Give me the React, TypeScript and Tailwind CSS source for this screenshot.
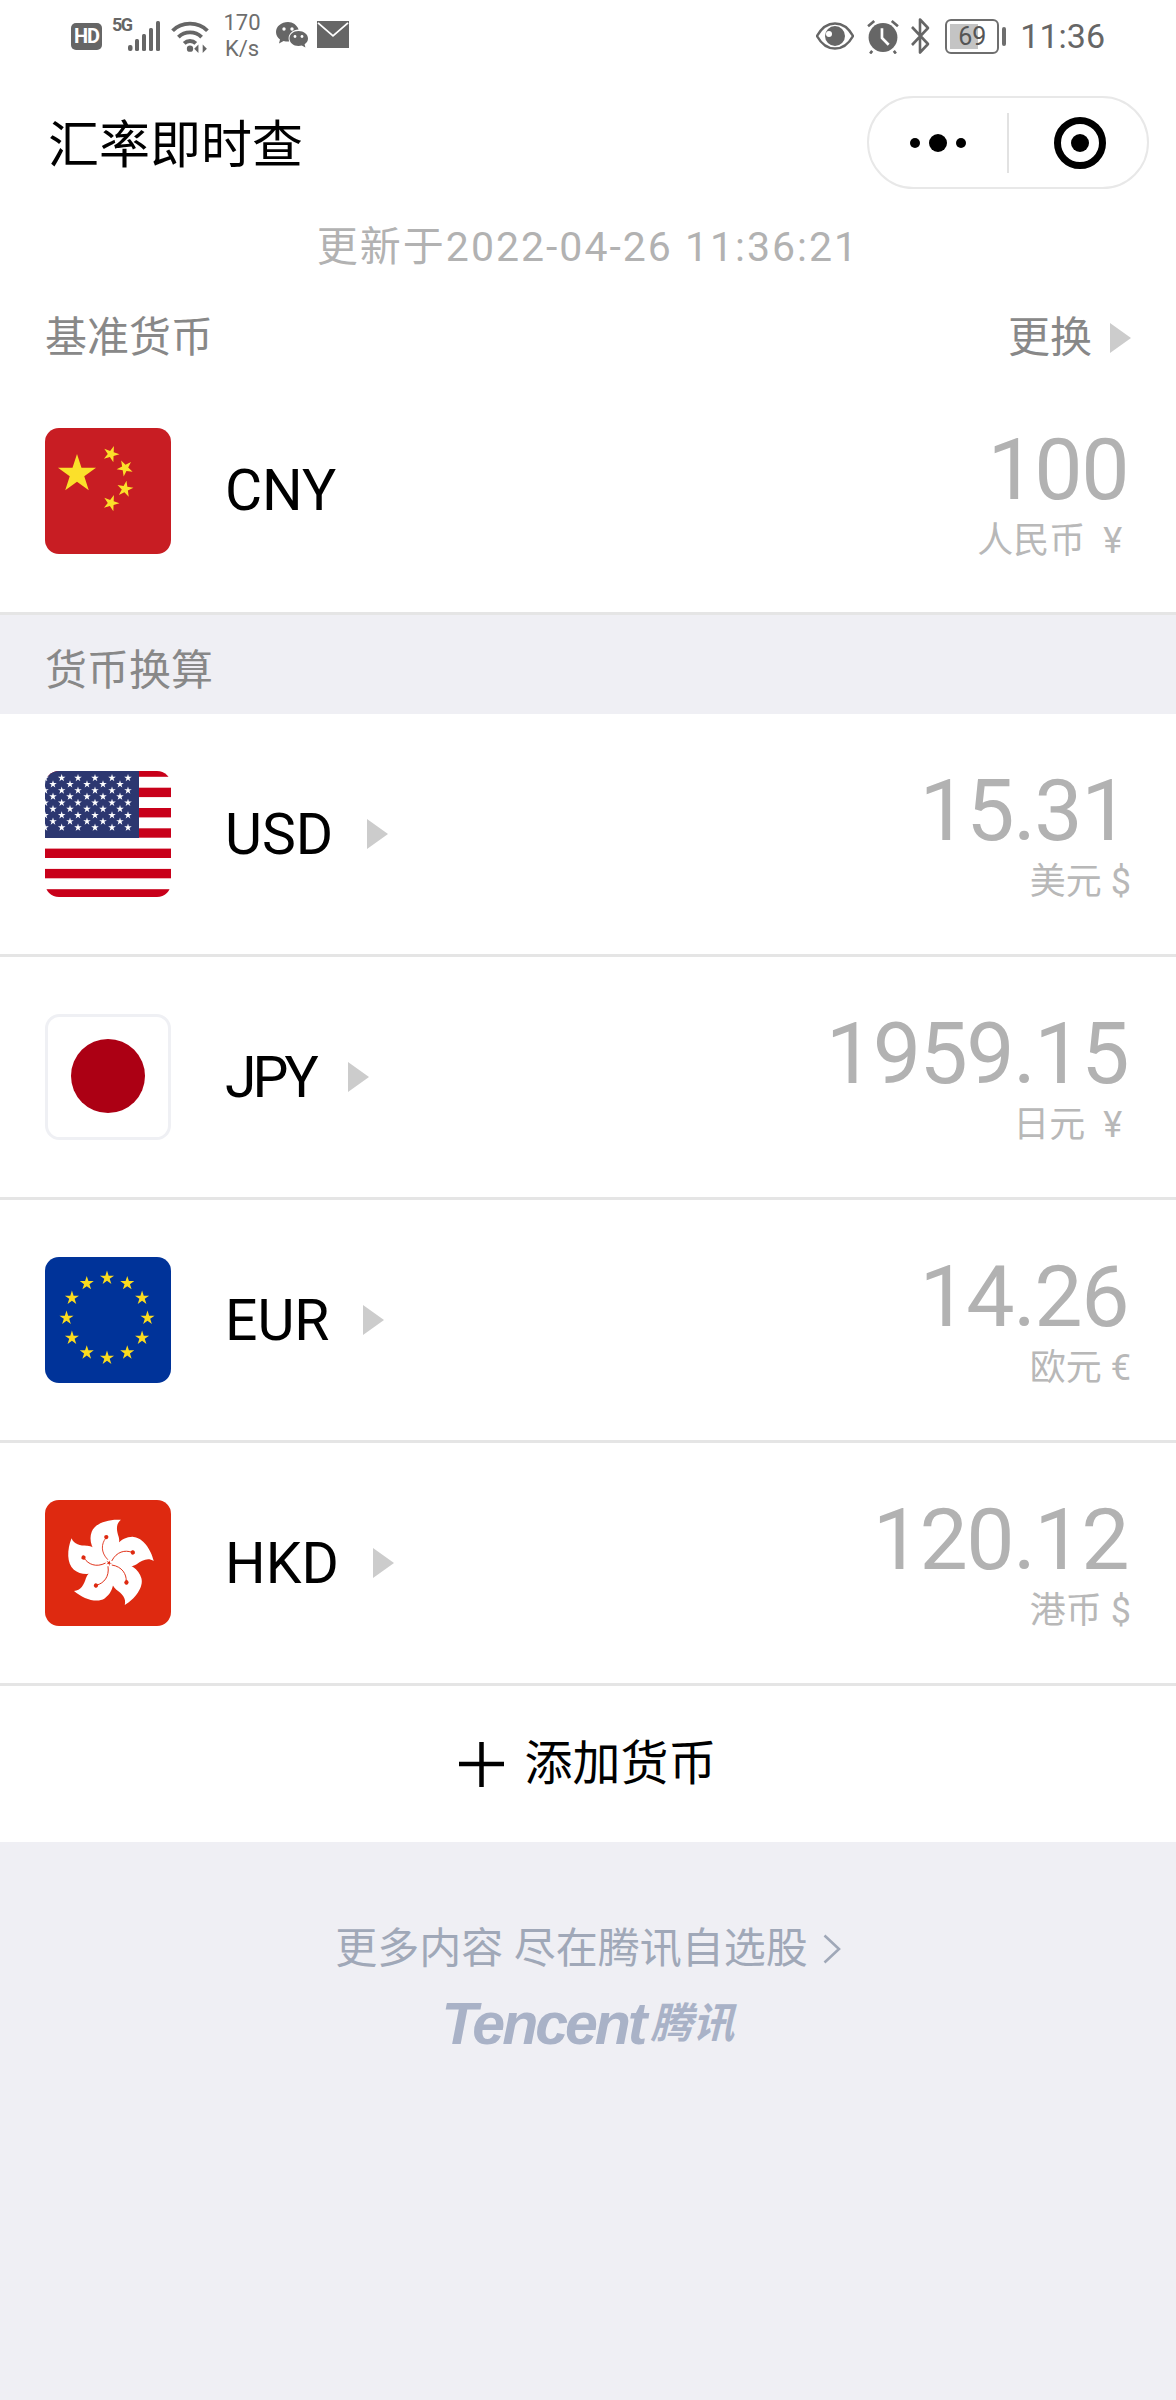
import React from "react";

const SANS = "font-['Roboto','Noto_Sans_CJK_SC',sans-serif]";

// Five-pointed star centred on (cx, cy), first point upward plus a rotation in degrees.
function starPoints(cx: number, cy: number, r: number, rot = 0) {
  const pts: string[] = [];
  for (let i = 0; i < 10; i++) {
    const rad = i % 2 === 0 ? r : r * 0.382;
    const a = ((-90 + rot + i * 36) * Math.PI) / 180;
    pts.push(`${(cx + rad * Math.cos(a)).toFixed(2)},${(cy + rad * Math.sin(a)).toFixed(2)}`);
  }
  return pts.join(" ");
}

function Flag({ children }: { children: React.ReactNode }) {
  return (
    <svg viewBox="0 0 126 126" className="w-[126px] h-[126px] shrink-0 rounded-[14px] block">
      {children}
    </svg>
  );
}

function FlagCN() {
  return (
    <Flag>
      <rect width="126" height="126" fill="#c81d23" />
      <polygon points={starPoints(32, 46, 20)} fill="#fbe02a" />
      <polygon points={starPoints(66, 26, 8.5, 20)} fill="#fbe02a" />
      <polygon points={starPoints(80, 40, 8.5, 45)} fill="#fbe02a" />
      <polygon points={starPoints(80, 61, 8.5, 10)} fill="#fbe02a" />
      <polygon points={starPoints(66, 75, 8.5, 20)} fill="#fbe02a" />
    </Flag>
  );
}

function FlagUS() {
  const stars: React.ReactNode[] = [];
  for (let row = 0; row < 9; row++) {
    const odd = row % 2 === 1;
    const xs = odd ? [8, 25, 42, 58, 75] : [0, 16.7, 33, 50, 67, 83];
    xs.forEach((x) =>
      stars.push(<polygon key={`${row}-${x}`} points={starPoints(x, 7 + row * 6.2, 4)} fill="#fff" />)
    );
  }
  return (
    <Flag>
      <rect width="126" height="126" fill="#fff" />
      {[0, 1, 2, 3, 4, 5, 6].map((i) => (
        <rect key={i} x="0" y={i * 20.3 - 3.6} width="126" height="9.4" fill="#c8001a" />
      ))}
      <rect width="94" height="67" fill="#2c3770" />
      {stars}
    </Flag>
  );
}

function FlagJP() {
  return (
    <svg viewBox="0 0 126 126" className="w-[126px] h-[126px] shrink-0 block">
      <rect x="1.5" y="1.5" width="123" height="123" rx="13" fill="#fff" stroke="#eff0f4" strokeWidth="3" />
      <circle cx="63" cy="62" r="37" fill="#ac0014" />
    </svg>
  );
}

function FlagEU() {
  return (
    <Flag>
      <rect width="126" height="126" fill="#003399" />
      {Array.from({ length: 12 }).map((_, i) => {
        const a = (i * 30 * Math.PI) / 180;
        return (
          <polygon
            key={i}
            points={starPoints(62 + 40.5 * Math.sin(a), 61 - 40 * Math.cos(a), 7.4)}
            fill="#fbdc1e"
          />
        );
      })}
    </Flag>
  );
}

function FlagHK() {
  return (
    <Flag>
      <rect width="126" height="126" fill="#de2910" />
      <g transform="translate(64 63) scale(1.08) translate(-64 -63)">
        {[0, 72, 144, 216, 288].map((r) => (
          <g key={r} transform={`rotate(${r} 64 63)`}>
            <path d="M64 62C51 58 44 44 48 34C51 26 64 22 75 23C70 27 71 33 73 39C75 46 70 54 64 62Z" fill="#fff" />
            <path d="M63 60C56 53 57 45 61 40" fill="none" stroke="#de2910" strokeWidth="0.8" />
            <circle cx="61.5" cy="39" r="2" fill="#de2910" />
          </g>
        ))}
      </g>
    </Flag>
  );
}

function Caret() {
  return (
    <svg viewBox="0 0 21 30" className="w-[21px] h-[30px] shrink-0 block">
      <polygon points="0,0 21,15 0,30" fill="#cccccc" />
    </svg>
  );
}

type RowProps = {
  flag: React.ReactNode;
  code: string;
  value: string;
  label: string;
  base?: boolean;
  narrow?: boolean;
};

function CurrencyRow({ flag, code, value, label, base = false, narrow = false }: RowProps) {
  return (
    <div
      className={`${base ? "h-[246px]" : "h-[243px]"} bg-white border-b-[3px] border-[#e5e5e5] flex items-center pl-[45px] pr-[45px]`}
    >
      {flag}
      <span
        className={`ml-[54px] text-[57px] leading-none text-black ${narrow ? "tracking-[-4px]" : ""} ${SANS}`}
      >
        {code}
      </span>
      {!base && (
        <span className={narrow ? "ml-[33px]" : "ml-[34px]"}>
          <Caret />
        </span>
      )}
      <div className={`ml-auto flex flex-col items-end ${base ? "mt-[12px]" : "mt-[6px]"}`}>
        <span className={`mr-[3px] text-[86px] leading-[76px] text-[#b2b2b2] tracking-[-1.5px] ${SANS}`}>{value}</span>
        <span className={`text-[36px] leading-[40px] mt-[13px] text-[#b8b8b8] whitespace-pre ${SANS}`}>{label}</span>
      </div>
    </div>
  );
}

function StatusLeft() {
  return (
    <div className="flex items-center text-[#666]">
      <div className="w-[31px] h-[27px] rounded-[5px] bg-[#666] flex items-center justify-center text-white text-[20px] leading-none font-bold font-['Roboto',sans-serif] tracking-[-1px]">
        HD
      </div>
      <div className="ml-[10px] flex items-start h-[30px]">
        <span className="w-[17px] text-[18px] leading-none font-bold font-['Roboto',sans-serif] mt-[-5px] tracking-[-1.5px]">5G</span>
        <svg viewBox="0 0 33 30" className="w-[33px] h-[30px] -ml-[1px]">
          <rect x="0" y="24" width="4.5" height="6" rx="2" fill="#666" />
          <rect x="7" y="18" width="4" height="12" rx="1.5" fill="#666" />
          <rect x="14" y="13" width="4" height="17" rx="1.5" fill="#666" />
          <rect x="21" y="7" width="4" height="23" rx="1.5" fill="#666" />
          <rect x="28" y="0" width="4" height="30" rx="1.5" fill="#666" />
        </svg>
      </div>
      <svg viewBox="0 0 36 32" className="ml-[10px] w-[38px] h-[34px]" fill="none" stroke="#666" strokeWidth="3.6">
        <path d="M1.5 11C10 2 26 2 34.5 11" />
        <path d="M7 17C13 11 23 11 29 17" />
        <path d="M12.5 23C15.5 20 20.5 20 23.5 23" />
        <circle cx="18" cy="28" r="3" fill="#666" stroke="none" />
        <path d="M26 24L22 28L26 32Z" fill="#666" stroke="none" />
        <path d="M30 24L34 28L30 32Z" fill="#666" stroke="none" />
      </svg>
      <div className="ml-[13px] w-[40px] flex flex-col items-center text-[22px] leading-[26px] font-['Roboto',sans-serif] text-[#6e6e6e]">
        <span>170</span>
        <span>K/s</span>
      </div>
      <svg viewBox="0 0 32 30" className="ml-[14px] w-[32px] h-[30px]">
        <path d="M12 1C5.4 1 0 5.4 0 11C0 14 1.6 16.6 4 18.4L3 22.5L7.6 20C9 20.4 10.4 20.6 12 20.6C12.4 20.6 12.8 20.6 13.2 20.5C12.8 19.4 12.6 18.3 12.6 17.2C12.6 12.4 17 8.6 22.6 8.4C21 4.2 16.9 1 12 1Z" fill="#666" />
        <path d="M22.5 10C17.3 10 13.5 13.4 13.5 17.5C13.5 21.6 17.3 25 22.5 25C23.7 25 24.8 24.8 25.8 24.5L29.4 26.6L28.6 23.2C30.8 21.8 32 19.8 32 17.5C32 13.4 27.7 10 22.5 10Z" fill="#666" />
        <circle cx="8" cy="8" r="1.7" fill="#fff" />
        <circle cx="16" cy="8" r="1.7" fill="#fff" />
        <circle cx="19" cy="15.5" r="1.4" fill="#fff" />
        <circle cx="26" cy="15.5" r="1.4" fill="#fff" />
      </svg>
      <svg viewBox="0 0 32 29" className="ml-[9px] w-[32px] h-[27px] -mt-[3px]" preserveAspectRatio="none">
        <rect width="32" height="29" fill="#666" />
        <path d="M1 2L16 16L31 2" fill="none" stroke="#fff" strokeWidth="1.8" />
      </svg>
    </div>
  );
}

function StatusRight() {
  return (
    <div className="flex items-center">
      <svg viewBox="0 0 38 28" className="w-[38px] h-[28px]">
        <path d="M1 14C6 5 13 1.5 19 1.5C25 1.5 32 5 37 14C32 23 25 26.5 19 26.5C13 26.5 6 23 1 14Z" fill="none" stroke="#666" strokeWidth="2.4" />
        <circle cx="19" cy="14" r="10" fill="#666" />
        <circle cx="13" cy="12" r="3" fill="#fff" />
      </svg>
      <svg viewBox="0 0 33 34" className="ml-[12px] w-[34px] h-[35px]">
        <circle cx="16.5" cy="18" r="14" fill="#666" />
        <path d="M2 7L8 2M31 7L25 2M6 31L4 33.5M27 31L29 33.5" stroke="#666" strokeWidth="2.6" fill="none" />
        <path d="M15.5 9V18.5L22 25" stroke="#fff" strokeWidth="2.6" fill="none" />
      </svg>
      <svg viewBox="0 0 21 38" className="ml-[10px] w-[21px] h-[38px]">
        <path d="M2 10L18 27L10 35.5V2.5L18 11L2 28" fill="none" stroke="#666" strokeWidth="2.6" strokeLinejoin="round" />
      </svg>
      <div className="ml-[14px] relative w-[54px] h-[35px] rounded-[6px] border-[2.5px] border-[#6e6e6e] p-[3px]">
        <div className="w-[62%] h-full bg-[#c4c4c4]" />
        <span className="absolute inset-0 flex items-center justify-center text-[25px] leading-none text-[#555] font-['Roboto',sans-serif]">
          69
        </span>
      </div>
      <div className="ml-[3px] w-[4px] h-[19px] rounded-[2px] bg-[#6e6e6e]" />
      <span className="ml-[14px] text-[34px] leading-none text-[#666] font-['Roboto',sans-serif]">11:36</span>
    </div>
  );
}

export default function App() {
  return (
    <div className={`w-[1176px] min-h-[2400px] bg-[#efeff4] ${SANS}`}>
      <div className="bg-white">
        <div className="h-[72px] pl-[71px] pr-[71px] flex items-center justify-between">
          <StatusLeft />
          <StatusRight />
        </div>

        <div className="h-[141px] pl-[48px] pr-[27px] flex items-center justify-between">
          <span className="-mt-[3px] text-[51px] leading-none text-black font-['Noto_Sans_CJK_SC',sans-serif]">汇率即时查</span>
          <div className="w-[282px] h-[93px] rounded-full border-[2px] border-[#e8e8e8] flex items-center">
            <div className="w-[138px] flex items-center justify-center gap-[9px]">
              <span className="w-[10px] h-[10px] rounded-full bg-black" />
              <span className="w-[18px] h-[18px] rounded-full bg-black" />
              <span className="w-[10px] h-[10px] rounded-full bg-black" />
            </div>
            <div className="w-[1.5px] h-[60px] bg-[#e2e2e2]" />
            <div className="flex-1 flex items-center justify-center pl-[5px]">
              <div className="w-[52px] h-[52px] rounded-full border-[7px] border-black flex items-center justify-center">
                <div className="w-[18px] h-[18px] rounded-full bg-black" />
              </div>
            </div>
          </div>
        </div>

        <div className="h-[65px] pt-[3px] flex items-center justify-center text-[41px] leading-none text-[#b2b2b2] tracking-[2px]">
          更新于2022-04-26 11:36:21
        </div>

        <div className="mt-[29px] h-[62px] pl-[45px] pr-[45px] flex items-center justify-between text-[42px] leading-none text-[#888888]">
          <span>基准货币</span>
          <span className="flex items-center gap-[18px]">
            更换
            <Caret />
          </span>
        </div>

        <CurrencyRow base flag={<FlagCN />} code="CNY" value="100" label="人民币  ¥ " />
      </div>

      <div className="h-[99px] pl-[45px] pt-[12px] flex items-center text-[42px] leading-none text-[#888888]">货币换算</div>

      <CurrencyRow flag={<FlagUS />} code="USD" value="15.31" label="美元 $" />
      <CurrencyRow narrow flag={<FlagJP />} code="JPY" value="1959.15" label="日元  ¥ " />
      <CurrencyRow flag={<FlagEU />} code="EUR" value="14.26" label="欧元 €" />
      <CurrencyRow flag={<FlagHK />} code="HKD" value="120.12" label="港币 $" />

      <div className="h-[156px] bg-white flex items-center justify-center">
        <svg viewBox="0 0 45 45" className="w-[45px] h-[45px]">
          <path d="M0 22H45M22.5 0V45" stroke="#000" strokeWidth="4.5" fill="none" />
        </svg>
        <span className="ml-[20px] text-[48px] leading-none text-black">添加货币</span>
      </div>

      <div className="pt-[84px] flex flex-col items-center">
        <div className="flex items-center text-[42px] leading-[46px] text-[#a0a8b8]">
          <span>更多内容 尽在腾讯自选股</span>
          <svg viewBox="0 0 18 30" className="ml-[15px] w-[18px] h-[30px]">
            <path d="M1.5 1.5L16 15L1.5 28.5" fill="none" stroke="#a0a8b8" strokeWidth="2.6" />
          </svg>
        </div>
        <div className="mt-[28px] flex items-center text-[#a9b2c7] italic font-bold font-['Liberation_Sans','Noto_Sans_CJK_SC',sans-serif]">
          <span className="text-[59px] leading-[48px] tracking-[-3px]">Tencent</span>
          <span className="ml-[6px] text-[42px] leading-[48px]">腾讯</span>
        </div>
      </div>
    </div>
  );
}
